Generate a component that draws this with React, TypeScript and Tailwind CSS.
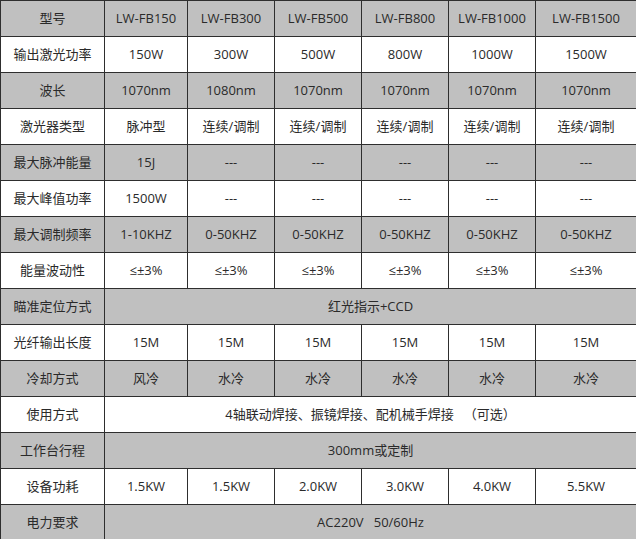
const MODELS = ["LW-FB150", "LW-FB300", "LW-FB500", "LW-FB800", "LW-FB1000", "LW-FB1500"];

type Row = { label: string; cells?: string[]; span?: string };

const ROWS: Row[] = [
  { label: "输出激光功率", cells: ["150W", "300W", "500W", "800W", "1000W", "1500W"] },
  { label: "波长", cells: ["1070nm", "1080nm", "1070nm", "1070nm", "1070nm", "1070nm"] },
  { label: "激光器类型", cells: ["脉冲型", "连续/调制", "连续/调制", "连续/调制", "连续/调制", "连续/调制"] },
  { label: "最大脉冲能量", cells: ["15J", "---", "---", "---", "---", "---"] },
  { label: "最大峰值功率", cells: ["1500W", "---", "---", "---", "---", "---"] },
  { label: "最大调制频率", cells: ["1-10KHZ", "0-50KHZ", "0-50KHZ", "0-50KHZ", "0-50KHZ", "0-50KHZ"] },
  { label: "能量波动性", cells: ["≤±3%", "≤±3%", "≤±3%", "≤±3%", "≤±3%", "≤±3%"] },
  { label: "瞄准定位方式", span: "红光指示+CCD" },
  { label: "光纤输出长度", cells: ["15M", "15M", "15M", "15M", "15M", "15M"] },
  { label: "冷却方式", cells: ["风冷", "水冷", "水冷", "水冷", "水冷", "水冷"] },
  { label: "使用方式", span: "4轴联动焊接、振镜焊接、配机械手焊接\u00a0\u00a0\u00a0（可选）" },
  { label: "工作台行程", span: "300mm或定制" },
  { label: "设备功耗", cells: ["1.5KW", "1.5KW", "2.0KW", "3.0KW", "4.0KW", "5.5KW"] },
  { label: "电力要求", span: "AC220V\u00a0\u00a0\u00a050/60Hz" },
];

const cell = "border border-[#2e2e2e] h-[36px] p-0 text-center align-middle whitespace-nowrap";

export default function App() {
  return (
    <div
      className="w-[636px] h-[539px] overflow-hidden bg-white text-[13px] text-[#2a2a2a]"
      style={{ fontFamily: '"Open Sans", "Noto Sans CJK SC", sans-serif' }}
    >
      <table className="table-fixed border-collapse w-[636px]">
        <colgroup>
          <col className="w-[104px]" />
          <col className="w-[83px]" />
          <col className="w-[87px]" />
          <col className="w-[87px]" />
          <col className="w-[87px]" />
          <col className="w-[87px]" />
          <col className="w-[101px]" />
        </colgroup>
        <tbody>
          <tr className="bg-[#c0c0c0]">
            <td className={cell}>型号</td>
            {MODELS.map((m) => (
              <td key={m} className={cell}>{m}</td>
            ))}
          </tr>
          {ROWS.map((r, i) => (
            <tr key={r.label} className={i % 2 === 0 ? "bg-white" : "bg-[#c0c0c0]"}>
              <td className={cell}>{r.label}</td>
              {r.span ? (
                <td colSpan={6} className={cell}>{r.span}</td>
              ) : (
                r.cells!.map((c, j) => (
                  <td key={j} className={cell}>{c}</td>
                ))
              )}
            </tr>
          ))}
        </tbody>
      </table>
    </div>
  );
}
